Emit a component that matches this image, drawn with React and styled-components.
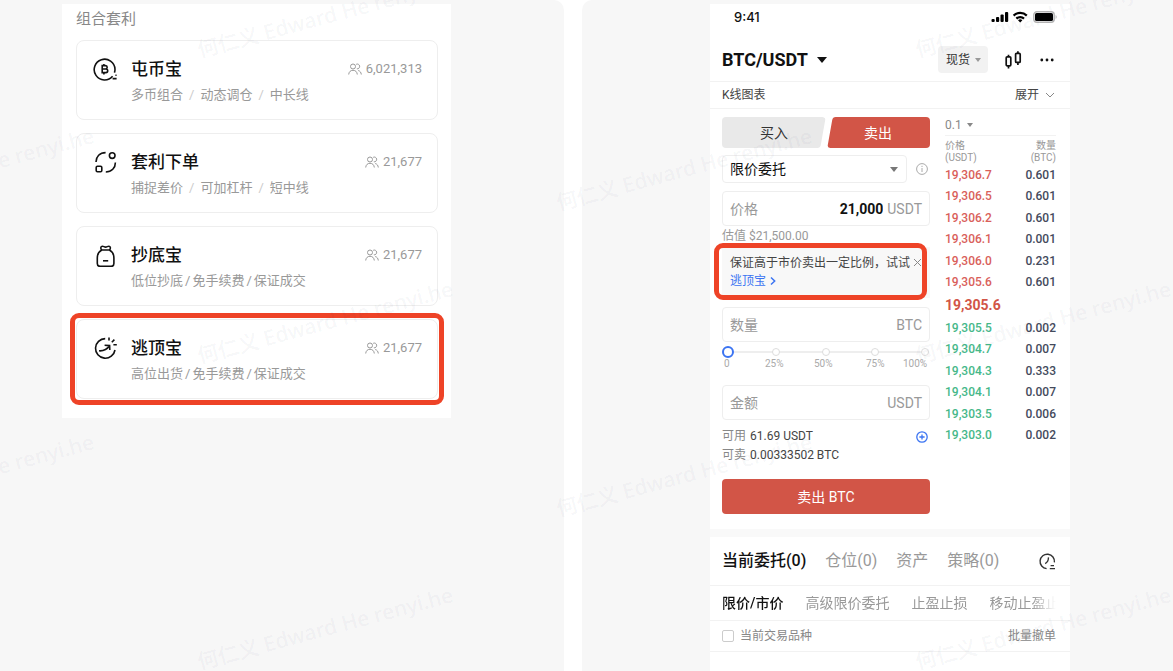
import React, { useState } from "react";
import styled, { createGlobalStyle, css } from "styled-components";

const products = [
  {
    id: "hoard",
    title: "屯币宝",
    tags: ["多币组合", "动态调仓", "中长线"],
    users: "6,021,313",
    icon: CoinIcon,
    loose: true,
  },
  {
    id: "arbitrage",
    title: "套利下单",
    tags: ["捕捉差价", "可加杠杆", "短中线"],
    users: "21,677",
    icon: SwapIcon,
    loose: true,
  },
  {
    id: "dip",
    title: "抄底宝",
    tags: ["低位抄底", "免手续费", "保证成交"],
    users: "21,677",
    icon: BagIcon,
  },
  {
    id: "peak",
    title: "逃顶宝",
    tags: ["高位出货", "免手续费", "保证成交"],
    users: "21,677",
    icon: PeakIcon,
    marked: true,
  },
];

const asks = [
  ["19,306.7", "0.601"],
  ["19,306.5", "0.601"],
  ["19,306.2", "0.601"],
  ["19,306.1", "0.001"],
  ["19,306.0", "0.231"],
  ["19,305.6", "0.601"],
];

const bids = [
  ["19,305.5", "0.002"],
  ["19,304.7", "0.007"],
  ["19,304.3", "0.333"],
  ["19,304.1", "0.007"],
  ["19,303.5", "0.006"],
  ["19,303.0", "0.002"],
];

// centre of every watermark, repeated in a brick pattern
const watermarks = [
  [325, 16],
  [325, 322],
  [325, 628],
  [-34, 169],
  [-34, 475],
  [684, 169],
  [684, 475],
  [1043, 16],
  [1043, 322],
  [1043, 628],
];

export default function App() {
  return (
    <>
      <GlobalStyle />
      <Page>
        <ProductPanel>
          <ProductList />
        </ProductPanel>
        <TradePanel>
          <TradeScreen />
        </TradePanel>
        <WatermarkLayer aria-hidden="true">
          {watermarks.map(([x, y]) => (
            <Watermark key={`${x}-${y}`} style={{ left: x, top: y }}>
              何仁义 Edward He renyi.he
            </Watermark>
          ))}
        </WatermarkLayer>
      </Page>
    </>
  );
}

function ProductList() {
  return (
    <ListScreen>
      <ListHeading>组合套利</ListHeading>
      {products.map(({ icon: Icon, ...item }) => (
        <Card key={item.id}>
          <Icon />
          <CardBody>
            <CardTop>
              <CardTitle>{item.title}</CardTitle>
              <Users>
                <UsersIcon />
                {item.users}
              </Users>
            </CardTop>
            <Tags $loose={item.loose}>
              {item.tags.map((tag, i) => (
                <React.Fragment key={tag}>
                  {i > 0 && <i>/</i>}
                  <span>{tag}</span>
                </React.Fragment>
              ))}
            </Tags>
          </CardBody>
          {item.marked && <CardMark />}
        </Card>
      ))}
    </ListScreen>
  );
}

function TradeScreen() {
  return (
    <PhoneScreen>
      <StatusBar>
        <span>9:41</span>
        <StatusIcons />
      </StatusBar>
      <Header>
        <PairButton type="button">
          BTC/USDT
          <Caret $size={5} />
        </PairButton>
        <HeaderActions>
          <MarketSelect>
            <select aria-label="市场" defaultValue="现货">
              <option>现货</option>
            </select>
            <Caret $size={3} $color="#999" />
          </MarketSelect>
          <IconButton type="button" aria-label="K线">
            <CandleIcon />
          </IconButton>
          <IconButton type="button" aria-label="更多">
            <MoreIcon />
          </IconButton>
        </HeaderActions>
      </Header>
      <ChartRow>
        <span>K线图表</span>
        <ExpandButton type="button">
          展开
          <svg width="10" height="6" viewBox="0 0 10 6" fill="none" stroke="#888">
            <path d="M1 1l4 4 4-4" />
          </svg>
        </ExpandButton>
      </ChartRow>
      <TradeArea>
        <OrderForm />
        <OrderBook />
      </TradeArea>
      <Divider />
      <Positions />
    </PhoneScreen>
  );
}

function OrderForm() {
  const [price, setPrice] = useState("21,000");
  const [amount, setAmount] = useState("");
  const [total, setTotal] = useState("");
  const [percent, setPercent] = useState(0);

  return (
    <Form onSubmit={(e) => e.preventDefault()}>
      <Sides>
        <BuyTab type="button">买入</BuyTab>
        <SellTab type="button">卖出</SellTab>
      </Sides>
      <TypeRow>
        <TypeSelect>
          <select aria-label="委托类型" defaultValue="限价委托">
            <option>限价委托</option>
          </select>
          <Caret $size={4} $color="#777" />
        </TypeSelect>
        <InfoIcon />
      </TypeRow>
      <Field>
        <label htmlFor="price">价格</label>
        <input
          id="price"
          value={price}
          onChange={(e) => setPrice(e.target.value)}
        />
        <span>USDT</span>
      </Field>
      <Estimate>估值 $21,500.00</Estimate>
      <Tip>
        <TipText>
          保证高于市价卖出一定比例，试试
          <br />
          <a href="#peak">
            逃顶宝
            <svg width="6" height="10" viewBox="0 0 6 10" fill="none" stroke="#3b74f2" strokeWidth="1.5">
              <path d="M1 1.5L4.7 5 1 8.5" />
            </svg>
          </a>
        </TipText>
        <TipClose type="button" aria-label="关闭">
          <svg width="9" height="9" viewBox="0 0 9 9" stroke="#888">
            <path d="M1 1l7 7M8 1L1 8" />
          </svg>
        </TipClose>
        <TipMark />
      </Tip>
      <Field>
        <label htmlFor="amount">数量</label>
        <input
          id="amount"
          value={amount}
          onChange={(e) => setAmount(e.target.value)}
        />
        <span>BTC</span>
      </Field>
      <SliderBox>
        <SliderDots>
          <i />
          <i />
          <i />
          <i />
          <i />
        </SliderDots>
        <Slider
          type="range"
          aria-label="比例"
          value={percent}
          onChange={(e) => setPercent(Number(e.target.value))}
        />
      </SliderBox>
      <SliderLabels>
        <span>0</span>
        <span>25%</span>
        <span>50%</span>
        <span>75%</span>
        <span>100%</span>
      </SliderLabels>
      <Field>
        <label htmlFor="total">金额</label>
        <input
          id="total"
          value={total}
          onChange={(e) => setTotal(e.target.value)}
        />
        <span>USDT</span>
      </Field>
      <Balances>
        <Balance>
          <span>可用</span> 61.69 USDT
          <IconButton type="button" aria-label="充值">
            <PlusIcon />
          </IconButton>
        </Balance>
        <Balance>
          <span>可卖</span> 0.00333502 BTC
        </Balance>
      </Balances>
      <Submit type="submit">卖出 BTC</Submit>
    </Form>
  );
}

function OrderBook() {
  return (
    <Book>
      <DepthSelect>
        <select aria-label="深度" defaultValue="0.1">
          <option>0.1</option>
        </select>
        <Caret $size={3} $color="#888" />
      </DepthSelect>
      <BookTable>
        <thead>
          <tr>
            <th>
              价格
              <br />
              (USDT)
            </th>
            <th>
              数量
              <br />
              (BTC)
            </th>
          </tr>
        </thead>
        <tbody>
          {asks.map(([price, size]) => (
            <BookRow key={price} $color="#d9605a">
              <td>{price}</td>
              <td>{size}</td>
            </BookRow>
          ))}
          <LastPrice>
            <td colSpan={2}>19,305.6</td>
          </LastPrice>
          {bids.map(([price, size]) => (
            <BookRow key={price} $color="#46b889">
              <td>{price}</td>
              <td>{size}</td>
            </BookRow>
          ))}
        </tbody>
      </BookTable>
    </Book>
  );
}

function Positions() {
  return (
    <>
      <MainTabs>
        <Tab type="button" $active>
          当前委托(0)
        </Tab>
        <Tab type="button">仓位(0)</Tab>
        <Tab type="button">资产</Tab>
        <Tab type="button">策略(0)</Tab>
        <HistoryButton type="button" aria-label="历史">
          <HistoryIcon />
        </HistoryButton>
      </MainTabs>
      <SubTabs>
        <SubTabsInner>
          <Tab type="button" $active>
            限价/市价
          </Tab>
          <Tab type="button">高级限价委托</Tab>
          <Tab type="button">止盈止损</Tab>
          <Tab type="button">移动止盈止损</Tab>
        </SubTabsInner>
      </SubTabs>
      <FilterRow>
        <label>
          <input type="checkbox" />
          当前交易品种
        </label>
        <button type="button">批量撤单</button>
      </FilterRow>
    </>
  );
}

function CoinIcon() {
  return (
    <CardIcon viewBox="0 0 24 24">
      <path d="M19.6 19.2A10.4 10.4 0 1 1 22 12.2c0 1.3-.2 2.4-.6 3.4" />
      <path d="M9.2 8.6h3.3a1.7 1.7 0 0 1 0 3.4H9.2zM9.2 12h3.7a1.8 1.8 0 0 1 0 3.6H9.2zM10.9 7v1.6M10.9 15.6v1.8" />
      <path d="M22.4 18.2h1.2M19.6 21.6h4" />
    </CardIcon>
  );
}

function SwapIcon() {
  return (
    <CardIcon viewBox="0 0 24 24">
      <path d="M3 12C3 6.600 6.800 2.600 12.600 2.600" />
      <path d="M22.400 12.400c0 5.600-3.800 9.600-9.600 9.600" />
      <circle cx="19.200" cy="5.600" r="2.800" />
      <rect x="3.200" y="16.200" width="5.600" height="5.600" rx="1.200" />
    </CardIcon>
  );
}

function BagIcon() {
  return (
    <CardIcon viewBox="0 0 24 24">
      <path d="M8.800 7C5.600 8.600 4.300 11.800 4.300 15v5.600c0 2 .8 2.800 2.800 2.800h11c2 0 2.800-.8 2.800-2.800V15c0-3.200-1.300-6.400-4.500-8z" />
      <path d="M8.800 7C7.400 5.800 7.400 3.400 9.200 3.200c1.400-.1 2 .9 3.400.9s2-1 3.400-.9c1.800.2 1.800 2.600.4 3.800" />
      <path d="M10 17.800h5.200" />
    </CardIcon>
  );
}

function PeakIcon() {
  return (
    <CardIcon viewBox="0 0 24 24">
      <path d="M12.200 2.600A9.800 9.800 0 1 0 22 14" />
      <path d="M6 14.800c4.600.4 8-1.400 10.600-5M11.600 9.200l5 .4.2 4.400" />
      <path d="M16 1.400v3M21.400 3.600l-2.600 2.600M20.400 8.800h3.400" />
    </CardIcon>
  );
}

function UsersIcon() {
  return (
    <svg width="14" height="12" viewBox="0 0 14 12" fill="none" stroke="#999">
      <circle cx="5" cy="3.500" r="2.500" />
      <path d="M.7 11.500C.9 8.800 2.600 7.300 5 7.300s4.100 1.500 4.300 4.200" />
      <path d="M8.200 1.300a2.400 2.400 0 1 1 .6 4.500M10.200 7.500c1.900.5 2.900 1.900 3.100 4" />
    </svg>
  );
}

function StatusIcons() {
  return (
    <svg width="66" height="12" viewBox="0 0 66 12">
      <rect x="0.500" y="8" width="3.200" height="3" rx="1" />
      <rect x="5" y="6" width="3.200" height="5" rx="1" />
      <rect x="9.500" y="3.600" width="3.200" height="7.400" rx="1" />
      <rect x="14" y="1" width="3.200" height="10" rx="1" />
      <g fill="none" stroke="#000" strokeWidth="2.200">
        <path d="M22.600 4.600a9.400 9.400 0 0 1 13.200 0" />
        <path d="M25.400 7.600a5.400 5.400 0 0 1 7.600 0" />
      </g>
      <path d="M27 9.200a3.200 3.200 0 0 1 4.400 0l-2.200 2.400z" />
      <rect x="42.800" y="0.800" width="20.400" height="10.400" rx="3" fill="none" stroke="#b4b4b4" strokeWidth="1.400" />
      <rect x="44" y="2" width="18" height="8" rx="1.600" />
      <path d="M64.600 4v4c1.400-.6 1.400-3.400 0-4z" fill="#b4b4b4" />
    </svg>
  );
}

function CandleIcon() {
  return (
    <svg width="18" height="18" viewBox="0 0 18 18" fill="none" stroke="#111" strokeWidth="1.700">
      <rect x="1.200" y="5.800" width="4.600" height="9" rx="1" />
      <path d="M3.500 3.800v2M3.500 14.800v2.800" />
      <rect x="10.600" y="2.400" width="4.600" height="9" rx="1" />
      <path d="M12.900.2v2.200M12.900 11.400v2.600" />
    </svg>
  );
}

function MoreIcon() {
  return (
    <svg width="14" height="4" viewBox="0 0 14 4" fill="#111">
      <circle cx="1.800" cy="2" r="1.400" />
      <circle cx="7" cy="2" r="1.400" />
      <circle cx="12.200" cy="2" r="1.400" />
    </svg>
  );
}

function InfoIcon() {
  return (
    <svg width="12" height="12" viewBox="0 0 12 12" fill="none" stroke="#aaa">
      <circle cx="6" cy="6" r="5.400" />
      <path d="M6 5v4M6 2.800v1.200" />
    </svg>
  );
}

function PlusIcon() {
  return (
    <svg width="12" height="12" viewBox="0 0 12 12" fill="none" stroke="#3b74f2" strokeWidth="1.300">
      <circle cx="6" cy="6" r="5.200" />
      <path d="M6 3.400v5.200M3.400 6h5.200" />
    </svg>
  );
}

function HistoryIcon() {
  return (
    <svg width="17" height="17" viewBox="0 0 17 17" fill="none" stroke="#333" strokeWidth="1.400">
      <path d="M7.600 15.600A7.200 7.200 0 1 1 15.400 9.400" />
      <path d="M9.400 4.400c.2 2.600-.8 4.800-3.200 6.200" />
      <path d="M11.600 12.600h3.400M10.800 15.600h5.200" />
    </svg>
  );
}

const GlobalStyle = createGlobalStyle`
  * {
    box-sizing: border-box;
  }

  body {
    margin: 0;
    background: #fff;
    color: #111;
    font-family: Roboto, "Noto Sans CJK SC", sans-serif;
    font-size: 12px;
    line-height: 16px;
  }

  button,
  input,
  select {
    margin: 0;
    padding: 0;
    border: 0;
    background: none;
    color: inherit;
    font: inherit;
  }

  svg {
    display: block;
    flex: none;
  }
`;

const Page = styled.main`
  position: relative;
  display: grid;
  grid-template-columns: 564fr 591fr;
  gap: 18px;
  min-height: 100vh;
  overflow: hidden;
`;

const Panel = styled.section`
  display: grid;
  padding-top: 4px;
  background: #f7f7f7;

  > * {
    grid-column: 2;
  }
`;

const ProductPanel = styled(Panel)`
  grid-template-columns: 62fr 389fr 113fr;
  align-items: start;
  border-radius: 0 10px 0 0;
`;

const TradePanel = styled(Panel)`
  grid-template-columns: 128fr 360fr 103fr;
  border-radius: 10px 0 0 0;
`;

const WatermarkLayer = styled.div`
  position: absolute;
  inset: 0;
  overflow: hidden;
  pointer-events: none;
`;

const Watermark = styled.span`
  position: absolute;
  transform: translate(-50%, -50%) rotate(-15deg);
  color: rgba(30, 40, 90, 0.055);
  font-family: "Noto Sans", "Noto Sans CJK SC", sans-serif;
  font-size: 21px;
  font-weight: 500;
  line-height: 28px;
  white-space: nowrap;
`;

/* product list */

const ListScreen = styled.div`
  display: flex;
  flex-direction: column;
  gap: 13px;
  padding: 4px 13px 19px 14px;
  background: #fff;
`;

const ListHeading = styled.h2`
  margin: 0 0 -3px;
  color: #888;
  font-size: 15px;
  font-weight: 400;
  line-height: 22px;
`;

const Card = styled.article`
  position: relative;
  display: flex;
  gap: 14px;
  min-height: 80px;
  padding: 16px 15px 12px 16px;
  border: 1px solid #eee;
  border-radius: 8px;
`;

const CardIcon = styled.svg`
  width: 24px;
  height: 24px;
  fill: none;
  stroke: #111;
  stroke-width: 1.6;
`;

const CardBody = styled.div`
  flex: 1;
`;

const CardTop = styled.div`
  display: flex;
  align-items: center;
  justify-content: space-between;
`;

const CardTitle = styled.h3`
  margin: 0;
  font-size: 17px;
  font-weight: 500;
  line-height: 24px;
`;

const Users = styled.span`
  display: flex;
  align-items: center;
  gap: 4px;
  color: #999;
  font-size: 13px;
  line-height: 18px;
`;

const Tags = styled.p`
  display: flex;
  gap: ${(p) => (p.$loose ? 6 : 2)}px;
  margin: 4px 0 0;
  color: #999;
  font-size: 13px;
  line-height: 20px;

  i {
    color: ${(p) => (p.$loose ? "#ccc" : "#999")};
    font-style: normal;
  }
`;

const mark = css`
  position: absolute;
  border: 5px solid #ee4327;
  border-radius: 9px;
  pointer-events: none;
`;

const CardMark = styled.div`
  ${mark}
  inset: -7px;
`;

/* trading screen */

const PhoneScreen = styled.div`
  display: flex;
  flex-direction: column;
  min-width: 0;
  background: #fff;
`;

const StatusBar = styled.div`
  display: flex;
  align-items: center;
  justify-content: space-between;
  height: 26px;
  padding: 0 13px 0 24px;
  font-family: Inter, sans-serif;
  font-size: 13px;
  font-weight: 500;
`;

const Header = styled.header`
  display: flex;
  align-items: center;
  justify-content: space-between;
  height: 52px;
  padding: 8px 16px 0 12px;
  border-bottom: 1px solid #f2f2f2;
`;

const Caret = styled.i`
  width: 0;
  height: 0;
  border: ${(p) => p.$size}px solid transparent;
  border-top: ${(p) => p.$size + 1}px solid ${(p) => p.$color || "#111"};
  border-bottom: 0;
  pointer-events: none;
`;

const PairButton = styled.button`
  display: flex;
  align-items: center;
  gap: 9px;
  font-size: 18px;
  font-weight: 700;
`;

const HeaderActions = styled.div`
  display: flex;
  align-items: center;
  gap: 17px;
`;

const IconButton = styled.button`
  display: flex;
  align-items: center;
  justify-content: center;
`;

const SelectBox = styled.div`
  display: grid;
  align-items: center;

  > * {
    grid-area: 1 / 1;
  }

  select {
    width: 100%;
    height: 100%;
    appearance: none;
    outline: none;
  }

  ${Caret} {
    justify-self: end;
  }
`;

const MarketSelect = styled(SelectBox)`
  width: 50px;
  height: 27px;
  border-radius: 4px;
  background: #f2f2f2;
  color: #333;

  select {
    padding-left: 8px;
  }

  ${Caret} {
    margin-right: 7px;
  }
`;

const ChartRow = styled.div`
  display: flex;
  align-items: center;
  justify-content: space-between;
  height: 27px;
  padding: 0 15px 0 12px;
  border-bottom: 1px solid #f2f2f2;
  color: #444;
`;

const ExpandButton = styled.button`
  display: flex;
  align-items: center;
  gap: 6px;
`;

const TradeArea = styled.div`
  display: grid;
  grid-template-columns: 208fr 111fr;
  gap: 15px;
  padding: 8px 14px 15px 12px;
`;

const Form = styled.form`
  display: flex;
  flex-direction: column;
  min-width: 0;
`;

const Sides = styled.div`
  display: grid;
  grid-template-columns: 1fr 1fr;
`;

const SideTab = styled.button`
  position: relative;
  z-index: 0;
  height: 31px;
  overflow: hidden;
  border-radius: 4px;
  font-size: 14px;

  &::before {
    content: "";
    position: absolute;
    z-index: -1;
    inset: 0;
    border-radius: 3px;
  }
`;

const BuyTab = styled(SideTab)`
  color: #333;

  &::before {
    inset: 0 3px 0 -10px;
    transform: skewX(-10deg);
    background: #e9e9e9;
  }
`;

const SellTab = styled(SideTab)`
  color: #fff;

  &::before {
    inset: 0 -10px 0 4px;
    transform: skewX(-10deg);
    background: #d25547;
  }
`;

const TypeRow = styled.div`
  display: flex;
  align-items: center;
  gap: 9px;
  margin: 7px 2px 8px 0;
`;

const TypeSelect = styled(SelectBox)`
  flex: 1;
  height: 28px;
  border: 1px solid #eee;
  border-radius: 4px;
  font-size: 14px;

  select {
    padding-left: 7px;
  }

  ${Caret} {
    margin-right: 8px;
  }
`;

const Field = styled.div`
  display: flex;
  align-items: center;
  gap: 4px;
  height: 35px;
  padding: 0 7px;
  border: 1px solid #eee;
  border-radius: 4px;
  color: #999;
  font-size: 14px;

  label {
    flex: none;
  }

  input {
    flex: 1;
    min-width: 0;
    outline: none;
    color: #111;
    font-weight: 700;
    text-align: right;
  }
`;

const Estimate = styled.p`
  margin: 0;
  color: #999;
  line-height: 21px;
`;

const Tip = styled.div`
  position: relative;
  display: flex;
  align-items: flex-start;
  justify-content: space-between;
  height: 51px;
  margin-bottom: 9px;
  padding: 7px 8px;
  background: #f8f8f8;
  color: #444;
`;

const TipText = styled.p`
  margin: 0;
  line-height: 18px;
  white-space: nowrap;

  a {
    display: inline-flex;
    align-items: center;
    gap: 4px;
    color: #3b74f2;
    text-decoration: none;
  }
`;

const TipClose = styled.button`
  display: flex;
  padding: 4px 0;
`;

const TipMark = styled.div`
  ${mark}
  inset: -4px 3px -2px -8px;
`;

const SliderBox = styled.div`
  display: grid;
  align-items: center;
  height: 12px;
  margin-top: 4px;

  > * {
    grid-area: 1 / 1;
  }
`;

const SliderDots = styled.div`
  display: flex;
  align-items: center;
  justify-content: space-between;
  padding: 0 1px 0 0;
  background: linear-gradient(#eee, #eee) center / calc(100% - 8px) 2px no-repeat;

  i {
    width: 8px;
    height: 8px;
    border: 1px solid #ddd;
    border-radius: 50%;
    background: #fff;
  }
`;

const Slider = styled.input`
  width: 100%;
  height: 12px;
  appearance: none;
  outline: none;

  &::-webkit-slider-thumb {
    width: 12px;
    height: 12px;
    border: 2px solid #3b74f2;
    border-radius: 50%;
    background: #fff;
    appearance: none;
  }
`;

const SliderLabels = styled.div`
  display: grid;
  grid-template-columns: 41fr 49fr 52fr 37fr 27fr;
  margin-bottom: 16px;
  padding-left: 2px;
  color: #aaa;
  font-size: 10px;
  line-height: 11px;
`;

const Balances = styled.div`
  display: flex;
  flex-direction: column;
  margin: 7px 0 14px;
`;

const Balance = styled.p`
  display: flex;
  align-items: center;
  gap: 4px;
  margin: 0;
  padding-right: 2px;
  color: #444;
  line-height: 19px;

  span {
    color: #888;
  }

  ${IconButton} {
    margin-left: auto;
  }
`;

const Submit = styled.button`
  height: 35px;
  border-radius: 4px;
  background: #d25547;
  color: #fff;
  font-size: 14px;
`;

const Book = styled.div`
  min-width: 0;
`;

const DepthSelect = styled(SelectBox)`
  width: 28px;
  height: 16px;
  margin-bottom: 2px;
  color: #888;
`;

const BookTable = styled.table`
  width: 100%;
  height: 311px;
  border-top: 1px solid #f2f2f2;
  border-spacing: 0;

  thead tr {
    height: 28px;
  }

  th {
    padding: 4px 0 0;
    color: #999;
    font-size: 10px;
    font-weight: 400;
    line-height: 12px;
    text-align: left;
  }

  td {
    padding: 0;
    font-weight: 500;
    line-height: 14px;
  }

  th:nth-child(2),
  td:nth-child(2) {
    text-align: right;
  }
`;

const BookRow = styled.tr`
  color: ${(p) => p.$color};

  td:nth-child(2) {
    color: #444a5c;
  }
`;

const LastPrice = styled.tr`
  height: 24px;
  color: #d25547;

  td {
    font-size: 14px;
    font-weight: 700;
  }
`;

const Divider = styled.div`
  height: 8px;
  background: #f9f9f9;
`;

const Tab = styled.button`
  flex: none;
  color: ${(p) => (p.$active ? "#111" : "#999")};
  font-weight: ${(p) => (p.$active ? 500 : 400)};
`;

const MainTabs = styled.nav`
  display: flex;
  align-items: center;
  gap: 19px;
  height: 49px;
  padding: 0 14px 0 12px;
  border-bottom: 1px solid #f2f2f2;
  font-size: 16px;
`;

const HistoryButton = styled(IconButton)`
  margin-left: auto;
`;

const SubTabs = styled.nav`
  height: 35px;
  padding: 0 14px 0 12px;
  border-bottom: 1px solid #f2f2f2;
  font-size: 14px;
`;

const SubTabsInner = styled.div`
  display: flex;
  gap: 22px;
  height: 100%;
  overflow: hidden;
  mask-image: linear-gradient(to left, transparent, #000 24px);
`;

const FilterRow = styled.div`
  display: flex;
  align-items: center;
  justify-content: space-between;
  height: 31px;
  padding: 0 14px 0 12px;
  border-bottom: 1px solid #f2f2f2;
  color: #888;

  label {
    display: flex;
    align-items: center;
    gap: 6px;
  }

  input {
    width: 12px;
    height: 12px;
    border: 1px solid #ccc;
    border-radius: 2px;
    appearance: none;
  }
`;
